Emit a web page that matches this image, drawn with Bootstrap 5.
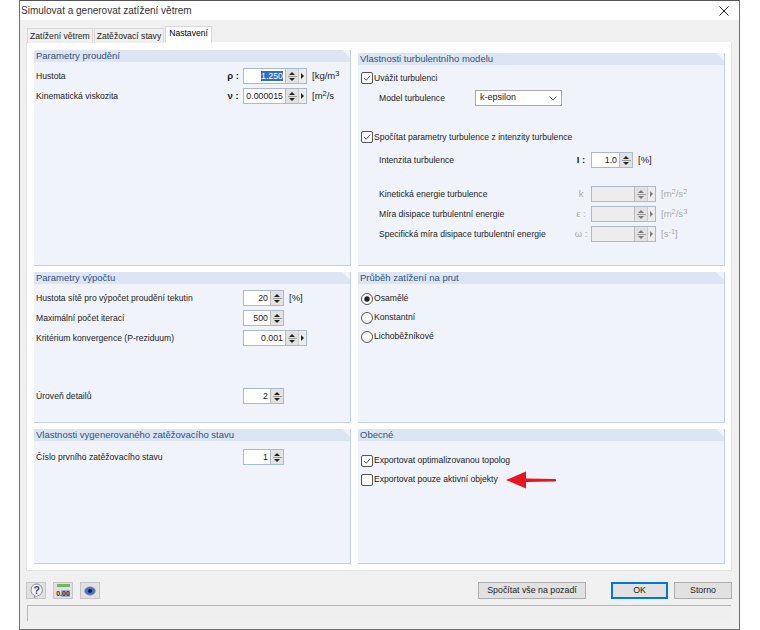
<!DOCTYPE html>
<html lang="cs">
<head>
<meta charset="UTF-8">
<meta name="viewport" content="width=device-width, initial-scale=1.0">
<title>Simulovat a generovat zatížení větrem</title>
<link href="https://cdn.jsdelivr.net/npm/bootstrap@5.3.2/dist/css/bootstrap.min.css" rel="stylesheet">
<style>
body { background: #fff; font-family: "Liberation Sans", sans-serif; font-size: 8.6px; color: #222; }
.dlg { width: 721px; height: 630px; margin-left: 19px; background: #f0f0f0; border: 1px solid #707070; border-top-color: #555; }
.dlg-title { height: 19px; background: #fff; padding-left: 1px; font-size: 10px; color: #333; }
.dlg-close { width: 30px; }
.dlg-tabs { padding: 6px 0 0 7px; height: 22px; border: 0; gap: 1px; align-items: flex-end; }
.dlg-tabs .nav-link { padding: 0 2px; height: 15px; line-height: 15px; color: #222; background: #f0f0f0; border: 1px solid #d9d9d9; border-bottom: 0; border-radius: 0; font-size: 8.6px; }
.dlg-tabs .nav-link.active { height: 17px; line-height: 13px; background: #fff; border-color: #d9d9d9; padding: 0 3px; }
.tab-body { width: 706px; height: 529px; margin-left: 6px; background: #fff; padding: 8px 0 0 7px; display: grid; grid-template-columns: 317px 367px; grid-template-rows: 216px 151px 135px; column-gap: 7px; row-gap: 6px; border: 1px solid #e3e3e3; border-top: 0; }
.pane { background: #f0f4fa; border-right: 1px solid #c3cfea; border-bottom: 1px solid #c3cfea; }
.pane-low { margin-top: 3px; }
.pane-head { height: 12px; line-height: 12px; background: #dbe5f3; color: #33527a; font-size: 9.5px; padding-left: 2px; clip-path: polygon(0 0, calc(100% - 8px) 0, 100% 8px, 100% 100%, 0 100%); }
.pane-body { padding: 4px 0 0 2px; }
.pad3 { padding-top: 3px; }
.pad5 { padding-top: 5px; }
.pad6 { padding-top: 6px; }
.pad10 { padding-top: 10px; }
.frow { height: 20px; }
.frow-tight { height: 19px; }
.lbl { width: 187px; }
.lbl-wide { width: 207px; }
.lbl-model { width: 96px; }
.lbl-r { width: 192px; }
.sym { width: 20px; text-align: center; font-weight: 700; font-size: 9.5px; }
.unit { margin-left: 5px; font-size: 9.5px; color: #222; }
.unit sup { font-size: 7.5px; top: -.35em; }
.spin { height: 16px; border: 1px solid #a9bad0; background: #fff; }
.spin-val { text-align: right; padding-right: 2px; line-height: 14px; font-size: 8.8px; background: #fff; }
.w26 { width: 26px; } .w27 { width: 27px; } .w41 { width: 41px; } .w42 { width: 42px; }
.sel { background: #2f6fc9; color: #fff; }
.spin-btn { width: 13px; height: 14px; background: #e2e2e2; border-left: 1px solid #bbb; }
.spin-btn i { display: block; width: 0; height: 0; border-left: 3px solid transparent; border-right: 3px solid transparent; }
.spin-btn .up { border-bottom: 3px solid #222; }
.spin-btn .dn { border-top: 3px solid #222; margin-top: 1px; }
.spin-btn b { display: block; width: 9px; height: 1px; margin-top: 1px; background: #999; }
.spin-more { width: 8px; height: 14px; background: #ececec; border-left: 1px solid #ccc; }
.spin-more i { display: block; width: 0; height: 0; border-top: 3px solid transparent; border-bottom: 3px solid transparent; border-left: 3px solid #222; }
.spin-off, .spin-off .spin-val { background: #ededed; }
.spin-off .spin-btn i { opacity: .55; }
.spin-off .spin-more i { opacity: .55; }
.off { color: #aaa; }
.sym-off { font-weight: 400; color: #aaa; }
.sub { padding-left: 19px; }
.gap-19 { height: 19px; }
.gap-3 { height: 3px; }
.gap-14 { height: 14px; }
.gap-38 { height: 38px; }
.combo { width: 87px; height: 16px; background: #fff; border: 1px solid #a8a8a8; padding: 0 4px; font-size: 9px; }
.chk.form-check-input { width: 12px; height: 12px; margin: 0 1px 0 1px; border: 1px solid #555; border-radius: 2px; background-color: #fff; flex: none; box-shadow: none; }
.chk.form-check-input:checked { background-color: #fff; border-color: #555; background-image: url("data:image/svg+xml,%3Csvg xmlns='http://www.w3.org/2000/svg' viewBox='0 0 13 13'%3E%3Cpath d='M2.5 6.5l3 3 5-6' fill='none' stroke='%23333' stroke-width='1.1'/%3E%3C/svg%3E"); background-size: 100%; }
.rad.form-check-input { width: 12px; height: 12px; margin: 0 1px 0 1px; border: 1px solid #555; background-color: #fff; flex: none; box-shadow: none; }
.rad.form-check-input:checked { background-color: #fff; border-color: #555; background-image: url("data:image/svg+xml,%3Csvg xmlns='http://www.w3.org/2000/svg' viewBox='0 0 12 12'%3E%3Ccircle cx='6' cy='6' r='3.2' fill='%23222'/%3E%3C/svg%3E"); background-size: 100%; }
.bar { height: 34px; padding: 11px 7px 0 6px; }
.icon-btn { width: 20px; height: 17px; padding: 0; background: #e1e1e1; border: 1px solid #c6c6c6; border-radius: 0; }
.gap7 { gap: 7px; }
.dlg-btn { height: 17px; padding: 0; line-height: 15px; font-size: 8.8px; color: #222; background: #e1e1e1; border: 1px solid #adadad; border-radius: 0; }
.dlg-btn:hover { background: #e1e1e1; color: #222; border-color: #adadad; }
.btn-calc { width: 108px; margin-right: 25px; }
.btn-ok { width: 57px; border: 2px solid #0078d7; line-height: 13px; margin-right: 6px; }
.btn-cancel { width: 58px; }
.status { height: 16px; width: 704px; margin-left: 7px; border-top: 1px solid #b5b5b5; border-left: 1px solid #b5b5b5; background: #efefef; }
.red-arrow { margin-left: 8px; }
</style>
</head>
<body>
<div class="dlg">
  <div class="dlg-title d-flex align-items-center justify-content-between">
    <span>Simulovat a generovat zatížení větrem</span>
    <span class="dlg-close d-flex justify-content-center">
      <svg width="10" height="10" viewBox="0 0 10 10"><path d="M0.5 0.5l9 9M9.5 0.5l-9 9" stroke="#222" stroke-width="1" fill="none"/></svg>
    </span>
  </div>

  <ul class="nav nav-tabs dlg-tabs">
    <li class="nav-item"><a class="nav-link" href="#">Zatížení větrem</a></li>
    <li class="nav-item"><a class="nav-link" href="#">Zatěžovací stavy</a></li>
    <li class="nav-item"><a class="nav-link active" href="#">Nastavení</a></li>
  </ul>

  <div class="tab-body">
    <!-- flow parameters -->
    <section class="pane">
      <div class="pane-head">Parametry proudění</div>
      <div class="pane-body">
        <div class="frow d-flex align-items-center">
          <span class="lbl">Hustota</span><span class="sym">ρ :</span>
          <div class="spin d-flex"><div class="spin-val w41"><span class="sel">1.250</span></div><div class="spin-btn d-flex flex-column align-items-center justify-content-center"><i class="up"></i><b></b><i class="dn"></i></div><div class="spin-more d-flex align-items-center justify-content-center"><i></i></div></div>
          <span class="unit">[kg/m<sup>3</sup></span>
        </div>
        <div class="frow d-flex align-items-center">
          <span class="lbl">Kinematická viskozita</span><span class="sym">ν :</span>
          <div class="spin d-flex"><div class="spin-val w41">0.000015</div><div class="spin-btn d-flex flex-column align-items-center justify-content-center"><i class="up"></i><b></b><i class="dn"></i></div><div class="spin-more d-flex align-items-center justify-content-center"><i></i></div></div>
          <span class="unit">[m<sup>2</sup>/s</span>
        </div>
      </div>
    </section>

    <!-- turbulence model -->
    <section class="pane pane-low">
      <div class="pane-head">Vlastnosti turbulentního modelu</div>
      <div class="pane-body pad3">
        <div class="frow d-flex align-items-center">
          <input class="form-check-input chk" type="checkbox" checked><span>Uvážit turbulenci</span>
        </div>
        <div class="frow d-flex align-items-center sub">
          <span class="lbl-model">Model turbulence</span>
          <div class="combo d-flex align-items-center justify-content-between"><span>k-epsilon</span>
            <svg width="8" height="5" viewBox="0 0 8 5"><path d="M0.5 0.5l3.5 3.5 3.5-3.5" stroke="#555" fill="none"/></svg>
          </div>
        </div>
        <div class="gap-19"></div>
        <div class="frow d-flex align-items-center">
          <input class="form-check-input chk" type="checkbox" checked><span>Spočítat parametry turbulence z intenzity turbulence</span>
        </div>
        <div class="gap-3"></div>
        <div class="frow d-flex align-items-center sub">
          <span class="lbl-r">Intenzita turbulence</span><span class="sym">I :</span>
          <div class="spin d-flex"><div class="spin-val w27">1.0</div><div class="spin-btn d-flex flex-column align-items-center justify-content-center"><i class="up"></i><b></b><i class="dn"></i></div></div>
          <span class="unit">[%]</span>
        </div>
        <div class="gap-14"></div>
        <div class="frow d-flex align-items-center sub">
          <span class="lbl-r">Kinetická energie turbulence</span><span class="sym sym-off">k</span>
          <div class="spin spin-off d-flex"><div class="spin-val w42"></div><div class="spin-btn d-flex flex-column align-items-center justify-content-center"><i class="up"></i><b></b><i class="dn"></i></div><div class="spin-more d-flex align-items-center justify-content-center"><i></i></div></div>
          <span class="unit off">[m<sup>2</sup>/s<sup>2</sup></span>
        </div>
        <div class="frow d-flex align-items-center sub">
          <span class="lbl-r">Míra disipace turbulentní energie</span><span class="sym sym-off">ε :</span>
          <div class="spin spin-off d-flex"><div class="spin-val w42"></div><div class="spin-btn d-flex flex-column align-items-center justify-content-center"><i class="up"></i><b></b><i class="dn"></i></div><div class="spin-more d-flex align-items-center justify-content-center"><i></i></div></div>
          <span class="unit off">[m<sup>2</sup>/s<sup>3</sup></span>
        </div>
        <div class="frow d-flex align-items-center sub">
          <span class="lbl-r">Specifická míra disipace turbulentní energie</span><span class="sym sym-off">ω :</span>
          <div class="spin spin-off d-flex"><div class="spin-val w42"></div><div class="spin-btn d-flex flex-column align-items-center justify-content-center"><i class="up"></i><b></b><i class="dn"></i></div><div class="spin-more d-flex align-items-center justify-content-center"><i></i></div></div>
          <span class="unit off">[s<sup>-1</sup>]</span>
        </div>
      </div>
    </section>

    <!-- calculation parameters -->
    <section class="pane">
      <div class="pane-head">Parametry výpočtu</div>
      <div class="pane-body">
        <div class="frow d-flex align-items-center">
          <span class="lbl-wide">Hustota sítě pro výpočet proudění tekutin</span>
          <div class="spin d-flex"><div class="spin-val w26">20</div><div class="spin-btn d-flex flex-column align-items-center justify-content-center"><i class="up"></i><b></b><i class="dn"></i></div></div>
          <span class="unit">[%]</span>
        </div>
        <div class="frow d-flex align-items-center">
          <span class="lbl-wide">Maximální počet iterací</span>
          <div class="spin d-flex"><div class="spin-val w26">500</div><div class="spin-btn d-flex flex-column align-items-center justify-content-center"><i class="up"></i><b></b><i class="dn"></i></div></div>
        </div>
        <div class="frow d-flex align-items-center">
          <span class="lbl-wide">Kritérium konvergence (P-reziduum)</span>
          <div class="spin d-flex"><div class="spin-val w41">0.001</div><div class="spin-btn d-flex flex-column align-items-center justify-content-center"><i class="up"></i><b></b><i class="dn"></i></div><div class="spin-more d-flex align-items-center justify-content-center"><i></i></div></div>
        </div>
        <div class="gap-38"></div>
        <div class="frow d-flex align-items-center">
          <span class="lbl-wide">Úroveň detailů</span>
          <div class="spin d-flex"><div class="spin-val w26">2</div><div class="spin-btn d-flex flex-column align-items-center justify-content-center"><i class="up"></i><b></b><i class="dn"></i></div></div>
        </div>
      </div>
    </section>

    <!-- load shape on member -->
    <section class="pane">
      <div class="pane-head">Průběh zatížení na prut</div>
      <div class="pane-body pad5">
        <div class="frow-tight d-flex align-items-center"><input class="form-check-input rad" type="radio" name="shape" checked><span>Osamělé</span></div>
        <div class="frow-tight d-flex align-items-center"><input class="form-check-input rad" type="radio" name="shape"><span>Konstantní</span></div>
        <div class="frow-tight d-flex align-items-center"><input class="form-check-input rad" type="radio" name="shape"><span>Lichoběžníkové</span></div>
      </div>
    </section>

    <!-- generated load case -->
    <section class="pane">
      <div class="pane-head">Vlastnosti vygenerovaného zatěžovacího stavu</div>
      <div class="pane-body pad6">
        <div class="frow d-flex align-items-center">
          <span class="lbl-wide">Číslo prvního zatěžovacího stavu</span>
          <div class="spin d-flex"><div class="spin-val w26">1</div><div class="spin-btn d-flex flex-column align-items-center justify-content-center"><i class="up"></i><b></b><i class="dn"></i></div></div>
        </div>
      </div>
    </section>

    <!-- general -->
    <section class="pane">
      <div class="pane-head">Obecné</div>
      <div class="pane-body pad10">
        <div class="frow-tight d-flex align-items-center"><input class="form-check-input chk" type="checkbox" checked><span>Exportovat optimalizovanou topolog</span></div>
        <div class="frow-tight d-flex align-items-center"><input class="form-check-input chk" type="checkbox"><span>Exportovat pouze aktivní objekty</span>
          <svg class="red-arrow" width="50" height="18" viewBox="0 0 50 18"><path d="M0 9L20 0.5V7.5L49 8a1.2 1.2 0 0 1 0 2.4L20 11V17.5Z" fill="#e8141f"/></svg>
        </div>
      </div>
    </section>
  </div>

  <div class="bar d-flex align-items-start">
    <div class="d-flex gap7 me-auto">
      <button type="button" class="btn icon-btn d-flex align-items-center justify-content-center" aria-label="Nápověda">
        <svg width="15" height="15" viewBox="0 0 15 15"><path d="M7.5 1a6 6 0 0 1 1 11.9L5 14.5l1-1.9A6 6 0 0 1 7.5 1Z" fill="#f2f3f6" stroke="#8b8f96" stroke-width="1"/><text x="7.7" y="10.8" font-size="10.5" font-weight="700" text-anchor="middle" fill="#39456e" font-family="Liberation Sans">?</text></svg>
      </button>
      <button type="button" class="btn icon-btn d-flex align-items-center justify-content-center" aria-label="Jednotky">
        <svg width="16" height="15" viewBox="0 0 16 15"><rect x="2" y="1" width="13" height="3" fill="#74b85a"/><rect x="6" y="7" width="9" height="7" fill="#9fb0dc"/><text x="8" y="12.5" font-size="7" font-weight="700" text-anchor="middle" fill="#1f2a44" font-family="Liberation Sans">0.00</text></svg>
      </button>
      <button type="button" class="btn icon-btn d-flex align-items-center justify-content-center" aria-label="Zobrazení">
        <svg width="12" height="10" viewBox="0 0 12 10"><ellipse cx="6" cy="5" rx="5.4" ry="4.2" fill="#4a70c8" stroke="#8f9bb8" stroke-width=".7"/><circle cx="6" cy="5" r="2.1" fill="#10204e"/></svg>
      </button>
    </div>
    <button type="button" class="btn dlg-btn btn-calc">Spočítat vše na pozadí</button>
    <button type="button" class="btn dlg-btn btn-ok">OK</button>
    <button type="button" class="btn dlg-btn btn-cancel">Storno</button>
  </div>
  <div class="status"></div>
</div>
<script src="https://cdn.jsdelivr.net/npm/bootstrap@5.3.2/dist/js/bootstrap.bundle.min.js"></script>
</body>
</html>
